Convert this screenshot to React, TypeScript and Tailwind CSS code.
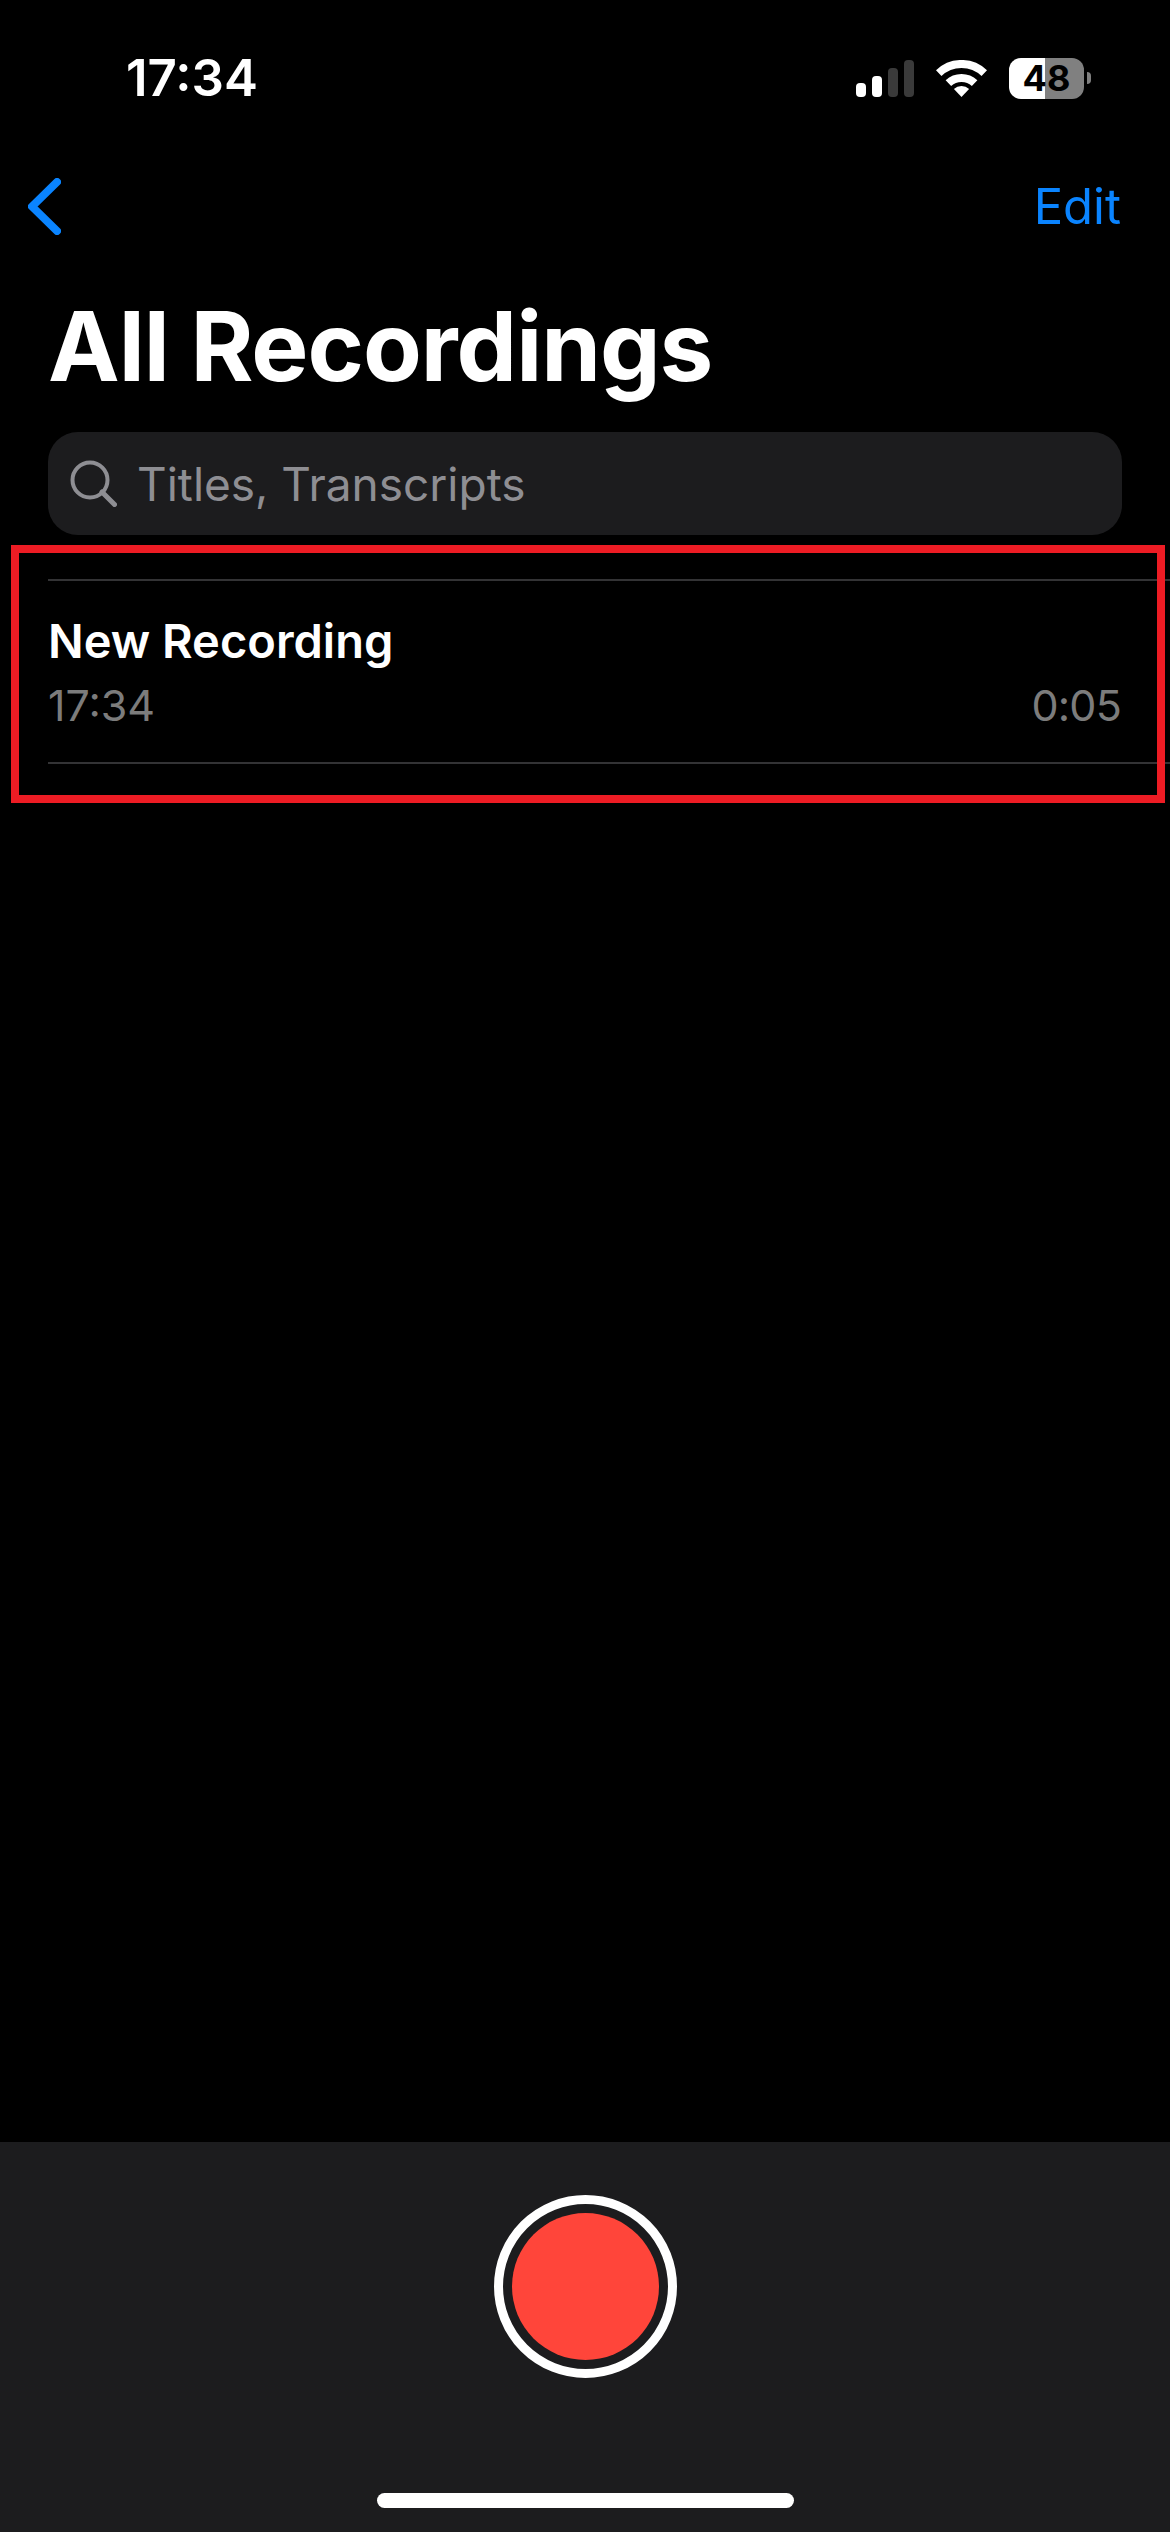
export default function App() {
  return (
    <div className="relative flex h-[2532px] w-[1170px] flex-col overflow-hidden bg-black font-['Inter',sans-serif] text-white">
      {/* status bar */}
      <div className="mt-[48px] flex h-[60px] items-center justify-between pl-[126px] pr-[79px]">
        <span className="text-[51px] font-semibold leading-[60px]">17:34</span>
        <div className="flex items-center">
          <div className="flex h-[37px] items-end gap-[6px]">
            <div className="h-[14px] w-[10px] rounded-[4px] bg-white" />
            <div className="h-[21px] w-[10px] rounded-[4px] bg-white" />
            <div className="h-[29px] w-[10px] rounded-[4px] bg-[#3a3a3a]" />
            <div className="h-[37px] w-[10px] rounded-[4px] bg-[#3a3a3a]" />
          </div>
          <svg className="ml-[22px] h-[37px] w-[51px]" viewBox="0 0 51 37" fill="none">
            <path d="M25.5 37 L17.9 29 A11 11 0 0 1 33.1 29 Z" fill="#fff" />
            <path d="M12.4 23.2 A19 19 0 0 1 38.6 23.2" stroke="#fff" strokeWidth="8" />
            <path d="M2.7 13.1 A33 33 0 0 1 48.3 13.1" stroke="#fff" strokeWidth="8" />
          </svg>
          <div className="ml-[22px] flex h-[41px] w-[75px] items-center justify-center rounded-[12px] bg-[linear-gradient(90deg,#fff_48%,#808080_48%)] text-[36px] font-bold leading-[41px] text-black">
            48
          </div>
          <div className="ml-[3px] h-[12px] w-[4px] rounded-r-full bg-[#808080]" />
        </div>
      </div>

      {/* nav */}
      <div className="mt-[58px] flex h-[80px] items-center justify-between pl-[28px] pr-[49px]">
        <svg className="h-[57px] w-[33px]" viewBox="0 0 33 57" fill="none">
          <path d="M29 4 L4 28.5 L29 53" stroke="#0a84ff" strokeWidth="8" strokeLinecap="round" strokeLinejoin="round" />
        </svg>
        <span className="mt-[2px] text-[49px] leading-[60px] text-[#0a84ff]">Edit</span>
      </div>

      {/* title */}
      <h1 className="mt-[45px] h-[110px] pl-[48px] text-[96px] font-bold leading-[110px] tracking-[-1px]">All Recordings</h1>

      {/* search */}
      <div className="mx-[48px] mt-[31px] flex h-[103px] items-center rounded-[30px] bg-[#1c1c1e] pl-[22px]">
        <svg className="h-[47px] w-[47px]" viewBox="0 0 47 47" fill="none">
          <circle cx="20" cy="20" r="17.5" stroke="#8e8e93" strokeWidth="4" />
          <path d="M32 32 L44.5 44.5" stroke="#8e8e93" strokeWidth="5" strokeLinecap="round" />
        </svg>
        <span className="ml-[20px] text-[46px] leading-[60px] text-[#8e8e93]">Titles, Transcripts</span>
      </div>

      {/* list */}
      <div className="ml-[48px] mt-[44px] flex h-[185px] flex-col border-y-2 border-[#333335] pr-[49px] pt-[30px]">
        <span className="text-[47px] font-semibold leading-[60px]">New Recording</span>
        <div className="mt-[9px] flex items-center justify-between text-[43px] leading-[50px] text-[#7c7c7c]">
          <span>17:34</span>
          <span className="tracking-[-0.8px]">0:05</span>
        </div>
      </div>

      {/* highlight annotation */}
      <div className="absolute left-[11px] top-[545px] h-[258px] w-[1154px] border-[8px] border-[#ed1c24]" />

      {/* record bar */}
      <div className="mt-auto flex h-[390px] flex-col items-center bg-[#1c1c1e]">
        <div className="mt-[53px] flex h-[183px] w-[183px] items-center justify-center rounded-full border-[9px] border-white">
          <div className="h-[147px] w-[147px] rounded-full bg-[#ff453a]" />
        </div>
        <div className="mt-[115px] h-[15px] w-[417px] rounded-full bg-white" />
      </div>
    </div>
  );
}
